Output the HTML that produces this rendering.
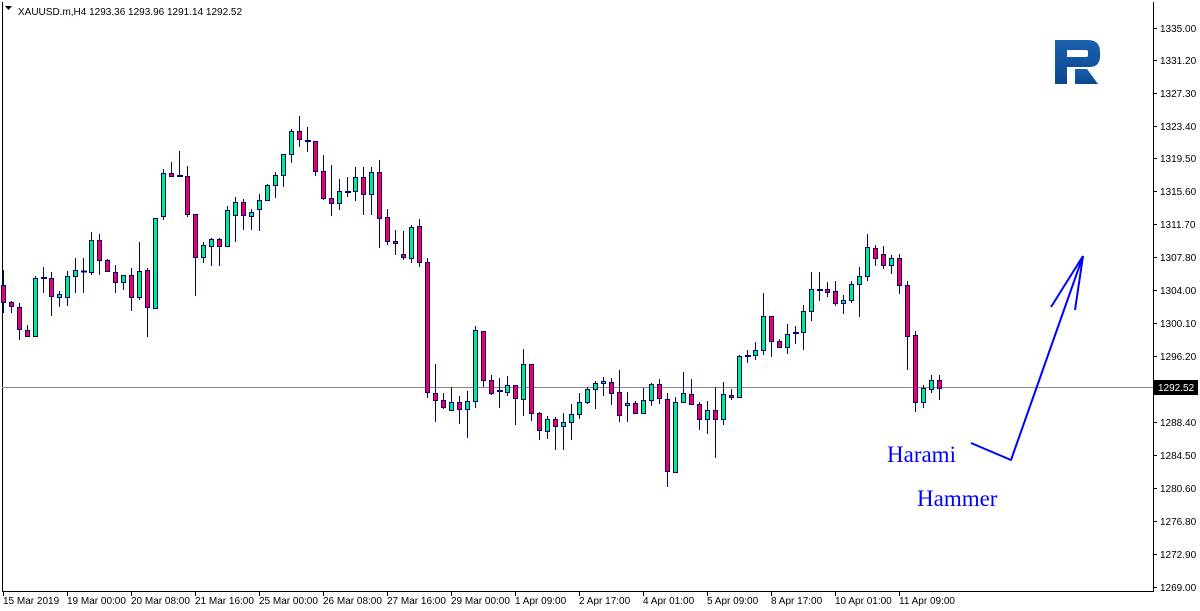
<!DOCTYPE html>
<html><head><meta charset="utf-8"><style>
html,body{margin:0;padding:0;background:#fff;width:1200px;height:611px;overflow:hidden}
svg{display:block}
text{font-family:"Liberation Sans",sans-serif;font-size:10px;fill:#000}
.g{fill:#00f07a;stroke:#000080;stroke-width:1}
.r{fill:#f0005a;stroke:#000080;stroke-width:1}
</style></head><body>
<svg width="1200" height="611" viewBox="0 0 1200 611" xmlns="http://www.w3.org/2000/svg">
<defs><linearGradient id="lg" x1="0" y1="0" x2="0" y2="1"><stop offset="0" stop-color="#1a5fae"/><stop offset="1" stop-color="#0b4790"/></linearGradient></defs>
<rect x="0" y="0" width="1200" height="611" fill="#fff"/>
<path d="M2.5 2V591.5H1153.5V2" fill="none" stroke="#000" stroke-width="1"/>
<line x1="2" y1="387.5" x2="1153" y2="387.5" stroke="#888" stroke-width="1"/>
<path d="M5 6h7l-3.5 4z" fill="#000"/>
<text x="18" y="15">XAUUSD.m,H4  1293.36 1293.96 1291.14 1292.52</text>
<path fill="none" stroke="#000080" stroke-width="1" d="M3.5 270V313M11.5 301V313M19.5 303V340M27.5 325V337M35.5 276V336M43.5 267V293M51.5 272V316M59.5 291V307M67.5 271V306M75.5 258V293M83.5 258V293M91.5 232V275M99.5 234V275M107.5 259V271M115.5 265V293M123.5 275V290M131.5 268V311M139.5 242V300M147.5 268V337M155.5 218V308M163.5 169V220M171.5 162V176M179.5 151V176M187.5 166V217M195.5 214V296M203.5 242V263M211.5 238V266M219.5 238V266M227.5 206V246M235.5 197V242M243.5 199V230M251.5 209V230M259.5 194V231M267.5 184V201M275.5 172V198M283.5 154V187M291.5 129V163M299.5 116V147M307.5 127V152M315.5 141V176M323.5 155V200M331.5 165V216M339.5 179V210M347.5 177V197M355.5 167V201M363.5 167V215M371.5 167V215M379.5 160V248M387.5 209V245M395.5 230V255M403.5 231V260M411.5 225V263M419.5 219V267M427.5 258V398M435.5 364V422M443.5 393V409M451.5 387V410M459.5 396V424M467.5 391V438M475.5 326V408M483.5 331V387M491.5 375V395M499.5 378V408M507.5 376V396M515.5 385V425M523.5 349V416M531.5 364V421M539.5 412V440M547.5 416V439M555.5 417V450M563.5 413V450M571.5 404V440M579.5 393V419M587.5 387V404M595.5 381V409M603.5 377V396M611.5 378V405M619.5 370V422M627.5 392V422M635.5 401V413M643.5 388V413M651.5 383V406M659.5 379V404M667.5 393V487M675.5 397V473M683.5 372V402M691.5 379V404M699.5 402V430M707.5 401V434M715.5 387V458M723.5 382V425M731.5 389V400M739.5 355V397M747.5 350V363M755.5 342V360M763.5 293V355M771.5 316V357M779.5 339V347M787.5 324V354M795.5 326V344M803.5 305V350M811.5 272V321M819.5 272V301M827.5 282V297M835.5 281V306M843.5 295V314M851.5 281V303M859.5 267V317M867.5 234V281M875.5 245V266M883.5 246V269M891.5 255V274M899.5 254V294M907.5 281V370M915.5 331V412M923.5 385V408M931.5 375V393M939.5 375V400"/>
<path fill="none" stroke="#000080" stroke-width="2" d="M41 278H47M177 176H183M305 141H311M345 192H351M497 391H503M745 356H751M793 333H799M817 290H823M81 271.5H87"/>
<g class="g">
<rect x="33.5" y="278.5" width="4" height="58"/><rect x="57.5" y="294.5" width="4" height="3"/><rect x="65.5" y="276.5" width="4" height="21"/><rect x="73.5" y="270.5" width="4" height="6"/><rect x="89.5" y="240.5" width="4" height="32"/><rect x="121.5" y="275.5" width="4" height="7"/><rect x="137.5" y="271.5" width="4" height="26"/><rect x="153.5" y="218.5" width="4" height="90"/><rect x="161.5" y="173.5" width="4" height="43"/><rect x="201.5" y="245.5" width="4" height="12"/><rect x="209.5" y="239.5" width="4" height="7"/><rect x="225.5" y="210.5" width="4" height="36"/><rect x="233.5" y="202.5" width="4" height="13"/><rect x="249.5" y="212.5" width="4" height="4"/><rect x="257.5" y="200.5" width="4" height="9"/><rect x="265.5" y="185.5" width="4" height="15"/><rect x="273.5" y="175.5" width="4" height="10"/><rect x="281.5" y="154.5" width="4" height="21"/><rect x="289.5" y="131.5" width="4" height="23"/><rect x="337.5" y="191.5" width="4" height="12"/><rect x="353.5" y="177.5" width="4" height="14"/><rect x="369.5" y="172.5" width="4" height="22"/><rect x="409.5" y="227.5" width="4" height="31"/><rect x="449.5" y="402.5" width="4" height="8"/><rect x="465.5" y="401.5" width="4" height="8"/><rect x="473.5" y="330.5" width="4" height="71"/><rect x="505.5" y="385.5" width="4" height="7"/><rect x="521.5" y="364.5" width="4" height="35"/><rect x="545.5" y="419.5" width="4" height="12"/><rect x="561.5" y="422.5" width="4" height="4"/><rect x="569.5" y="414.5" width="4" height="8"/><rect x="577.5" y="402.5" width="4" height="12"/><rect x="585.5" y="389.5" width="4" height="13"/><rect x="593.5" y="383.5" width="4" height="6"/><rect x="601.5" y="381.5" width="4" height="2"/><rect x="625.5" y="403.5" width="4" height="2"/><rect x="641.5" y="400.5" width="4" height="13"/><rect x="649.5" y="384.5" width="4" height="16"/><rect x="673.5" y="402.5" width="4" height="70"/><rect x="681.5" y="393.5" width="4" height="9"/><rect x="705.5" y="410.5" width="4" height="9"/><rect x="721.5" y="394.5" width="4" height="25"/><rect x="737.5" y="356.5" width="4" height="41"/><rect x="753.5" y="350.5" width="4" height="5"/><rect x="761.5" y="316.5" width="4" height="34"/><rect x="785.5" y="334.5" width="4" height="13"/><rect x="801.5" y="311.5" width="4" height="21"/><rect x="809.5" y="289.5" width="4" height="22"/><rect x="841.5" y="300.5" width="4" height="3"/><rect x="849.5" y="284.5" width="4" height="16"/><rect x="857.5" y="276.5" width="4" height="8"/><rect x="865.5" y="247.5" width="4" height="29"/><rect x="889.5" y="258.5" width="4" height="7"/><rect x="921.5" y="388.5" width="4" height="14"/><rect x="929.5" y="380.5" width="4" height="9"/>
</g>
<g class="r">
<rect x="1.5" y="285.5" width="4" height="17"/><rect x="9.5" y="302.5" width="4" height="4"/><rect x="17.5" y="307.5" width="4" height="22"/><rect x="25.5" y="330.5" width="4" height="6"/><rect x="49.5" y="278.5" width="4" height="18"/><rect x="97.5" y="240.5" width="4" height="20"/><rect x="105.5" y="260.5" width="4" height="11"/><rect x="113.5" y="272.5" width="4" height="10"/><rect x="129.5" y="275.5" width="4" height="22"/><rect x="145.5" y="270.5" width="4" height="37"/><rect x="169.5" y="173.5" width="4" height="3"/><rect x="185.5" y="176.5" width="4" height="38"/><rect x="193.5" y="214.5" width="4" height="43"/><rect x="217.5" y="239.5" width="4" height="7"/><rect x="241.5" y="202.5" width="4" height="13"/><rect x="297.5" y="131.5" width="4" height="8"/><rect x="313.5" y="141.5" width="4" height="30"/><rect x="321.5" y="171.5" width="4" height="27"/><rect x="329.5" y="198.5" width="4" height="5"/><rect x="361.5" y="177.5" width="4" height="17"/><rect x="377.5" y="172.5" width="4" height="46"/><rect x="385.5" y="217.5" width="4" height="24"/><rect x="393.5" y="241.5" width="4" height="2"/><rect x="401.5" y="254.5" width="4" height="3"/><rect x="417.5" y="226.5" width="4" height="36"/><rect x="425.5" y="262.5" width="4" height="130"/><rect x="433.5" y="393.5" width="4" height="7"/><rect x="441.5" y="400.5" width="4" height="7"/><rect x="457.5" y="402.5" width="4" height="7"/><rect x="481.5" y="331.5" width="4" height="49"/><rect x="489.5" y="380.5" width="4" height="13"/><rect x="513.5" y="385.5" width="4" height="13"/><rect x="529.5" y="364.5" width="4" height="49"/><rect x="537.5" y="413.5" width="4" height="17"/><rect x="553.5" y="419.5" width="4" height="7"/><rect x="609.5" y="382.5" width="4" height="11"/><rect x="617.5" y="392.5" width="4" height="23"/><rect x="633.5" y="403.5" width="4" height="10"/><rect x="657.5" y="384.5" width="4" height="14"/><rect x="665.5" y="399.5" width="4" height="72"/><rect x="689.5" y="394.5" width="4" height="10"/><rect x="697.5" y="404.5" width="4" height="15"/><rect x="713.5" y="410.5" width="4" height="9"/><rect x="729.5" y="395.5" width="4" height="2"/><rect x="769.5" y="316.5" width="4" height="25"/><rect x="777.5" y="341.5" width="4" height="6"/><rect x="825.5" y="289.5" width="4" height="3"/><rect x="833.5" y="291.5" width="4" height="12"/><rect x="873.5" y="248.5" width="4" height="10"/><rect x="881.5" y="254.5" width="4" height="11"/><rect x="897.5" y="258.5" width="4" height="27"/><rect x="905.5" y="285.5" width="4" height="51"/><rect x="913.5" y="335.5" width="4" height="67"/><rect x="937.5" y="380.5" width="4" height="8"/>
</g>
<g fill="none" stroke="#0000ff" stroke-width="2" stroke-linejoin="round">
<polyline points="971,443 1011,460 1083,256"/>
<line x1="1083" y1="256" x2="1051" y2="307"/>
<line x1="1083" y1="256" x2="1075" y2="310"/>
</g>
<text x="887" y="462" style="font-family:'Liberation Serif',serif;font-size:23px;fill:#0000ff">Harami</text>
<text x="917" y="506" style="font-family:'Liberation Serif',serif;font-size:23px;fill:#0000ff">Hammer</text>
<g fill="url(#lg)">
<path d="M1055 40H1088Q1100 40 1100 52V56Q1100 67 1089 67H1067V84H1055ZM1067 50V57H1086Q1088 57 1088 55V52Q1088 50 1086 50Z" fill-rule="evenodd"/>
<path d="M1075 69H1087L1098 84H1075Z"/>
</g>
<g stroke="#000" stroke-width="1">
<path d="M1153 28.5h4M1153 60.5h4M1153 93.5h4M1153 126.5h4M1153 158.5h4M1153 191.5h4M1153 224.5h4M1153 257.5h4M1153 290.5h4M1153 323.5h4M1153 356.5h4M1153 422.5h4M1153 455.5h4M1153 488.5h4M1153 521.5h4M1153 554.5h4M1153 587.5h4"/>
<path d="M3.5 591v5M67.5 591v5M131.5 591v5M195.5 591v5M259.5 591v5M323.5 591v5M387.5 591v5M451.5 591v5M515.5 591v5M579.5 591v5M643.5 591v5M707.5 591v5M771.5 591v5M835.5 591v5M899.5 591v5"/>
</g>
<g>
<text x="1160" y="32">1335.00</text><text x="1160" y="64">1331.20</text><text x="1160" y="97">1327.30</text><text x="1160" y="130">1323.40</text><text x="1160" y="162">1319.50</text><text x="1160" y="195">1315.60</text><text x="1160" y="228">1311.70</text><text x="1160" y="261">1307.80</text><text x="1160" y="294">1304.00</text><text x="1160" y="327">1300.10</text><text x="1160" y="360">1296.20</text><text x="1160" y="426">1288.40</text><text x="1160" y="459">1284.50</text><text x="1160" y="492">1280.60</text><text x="1160" y="525">1276.80</text><text x="1160" y="558">1272.90</text><text x="1160" y="591">1269.00</text>
</g>
<rect x="1154" y="380" width="44" height="15" fill="#000"/>
<text x="1158" y="391" style="fill:#fff">1292.52</text>
<g>
<text x="3" y="604">15 Mar 2019</text><text x="67" y="604">19 Mar 00:00</text><text x="131" y="604">20 Mar 08:00</text><text x="195" y="604">21 Mar 16:00</text><text x="259" y="604">25 Mar 00:00</text><text x="323" y="604">26 Mar 08:00</text><text x="387" y="604">27 Mar 16:00</text><text x="451" y="604">29 Mar 00:00</text><text x="515" y="604">1 Apr 09:00</text><text x="579" y="604">2 Apr 17:00</text><text x="643" y="604">4 Apr 01:00</text><text x="707" y="604">5 Apr 09:00</text><text x="771" y="604">8 Apr 17:00</text><text x="835" y="604">10 Apr 01:00</text><text x="899" y="604">11 Apr 09:00</text>
</g>
</svg>
</body></html>
